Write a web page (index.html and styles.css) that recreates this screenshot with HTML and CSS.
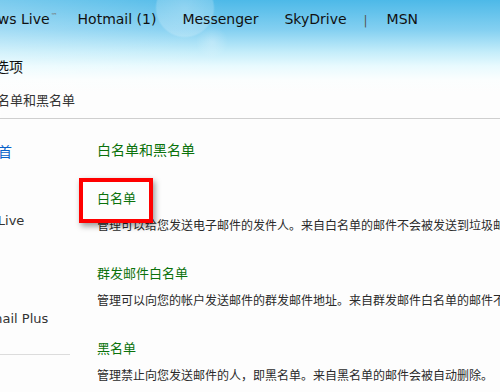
FILE: index.html
```html
<!DOCTYPE html>
<html lang="zh-CN">
<head>
  <meta charset="UTF-8">
  <title>白名单和黑名单 - Hotmail 选项</title>
  <link rel="stylesheet" href="styles.css">
</head>
<body>
  <div class="header">
    <ul class="nav">
      <li class="nav-brand">Windows Live<sup>™</sup></li>
      <li>Hotmail (1)</li>
      <li>Messenger</li>
      <li>SkyDrive</li>
      <li class="nav-sep">|</li>
      <li>MSN</li>
    </ul>
    <h1 class="title">选项</h1>
    <div class="crumb">白名单和黑名单</div>
  </div>

  <div class="main">
    <ul class="sidebar">
      <li class="side-link side-first">选项首</li>
      <li class="side-item side-live">Hotmail Live</li>
      <li class="side-item side-plus">Hotmail Plus</li>
    </ul>

    <div class="content">
      <h2>白名单和黑名单</h2>

      <div class="section">
        <h3><span class="marked">白名单</span></h3>
        <p>管理可以给您发送电子邮件的发件人。来自白名单的邮件不会被发送到垃圾邮件文件夹。</p>
      </div>

      <div class="section">
        <h3>群发邮件白名单</h3>
        <p>管理可以向您的帐户发送邮件的群发邮件地址。来自群发邮件白名单的邮件不会被发送到垃圾邮件文件夹。</p>
      </div>

      <div class="section">
        <h3>黑名单</h3>
        <p>管理禁止向您发送邮件的人，即黑名单。来自黑名单的邮件会被自动删除。</p>
      </div>
    </div>
  </div>
</body>
</html>
```

FILE: styles.css
```css
html, body {
  margin: 0;
  padding: 0;
}

body {
  width: 500px;
  height: 392px;
  overflow: hidden;
  background: #fdfdfd;
  font-family: "DejaVu Sans", "Noto Sans CJK SC", sans-serif;
  color: #333;
}

ul {
  list-style-type: none;
  margin: 0;
  padding: 0;
}

/* header */
.header {
  height: 111px;
  padding-top: 7px;
  border-bottom: 1px solid #cfcfcf;
  background:
    radial-gradient(circle at 185px 8px, rgba(255,255,255,0.3) 0, rgba(255,255,255,0.2) 28px, rgba(255,255,255,0) 30px),
    radial-gradient(circle at 212px 42px, rgba(255,255,255,0.25) 0, rgba(255,255,255,0) 16px),
    linear-gradient(to right, rgba(255,255,255,0.25) 0, rgba(255,255,255,0) 45%),
    linear-gradient(to bottom, #4db9e8 0, #84d0f1 30px, #c4edfa 52px, #e8fafe 66px, #fbfefe 80px, #fdfdfd 92px);
}

.nav {
  display: flex;
  align-items: center;
  height: 24px;
  font-size: 14px;
  color: #111;
  white-space: nowrap;
}

.nav li {
  margin-right: 26px;
}

.nav-brand {
  margin-left: -46px;
  margin-right: 20px !important;
}

.nav-brand sup {
  font-size: 7px;
  color: #777;
  vertical-align: 6px;
  margin-left: 1px;
}

.nav-sep {
  font-size: 12px;
  color: #555;
  margin-right: 19px !important;
  margin-left: -9px;
  padding-top: 4px;
}

.title {
  margin: 24px 0 0 -5px;
  font-size: 14px;
  font-weight: normal;
  line-height: 24px;
  color: #111;
}

.crumb {
  margin: 12px 0 0 -16px;
  font-size: 13px;
  line-height: 20px;
  color: #333;
}

/* body */
.main {
  display: flex;
}

.sidebar {
  width: 70px;
  flex-shrink: 0;
  padding-top: 23px;
  font-size: 13px;
  line-height: 20px;
  white-space: nowrap;
  border-bottom: 1px solid #dcdcdc;
  padding-bottom: 25px;
  align-self: flex-start;
}

.side-link {
  color: #0a62c9;
  font-size: 14px;
  margin-left: -30px;
}

.side-live {
  margin-top: 49px;
  margin-left: -57px;
}

.side-plus {
  margin-top: 78px;
  margin-left: -33px;
}

.content {
  margin-left: 27px;
  padding-top: 21px;
  white-space: nowrap;
}

.content h2 {
  margin: 0 0 29px;
  font-size: 14px;
  font-weight: normal;
  line-height: 20px;
  color: #0b720b;
}

.section h3 {
  margin: 0 0 7px;
  font-size: 13px;
  font-weight: normal;
  line-height: 20px;
  color: #0b720b;
}

.section p {
  margin: 0 0 28px;
  font-size: 12px;
  line-height: 20px;
  color: #2a2a2a;
}

.marked {
  position: relative;
}

.marked::after {
  content: "";
  position: absolute;
  left: -18px;
  top: -13px;
  width: 74px;
  height: 45px;
  box-sizing: border-box;
  border: 4px solid #f00;
  box-shadow: 2px 3px 6px rgba(0,0,0,0.4);
}
```
